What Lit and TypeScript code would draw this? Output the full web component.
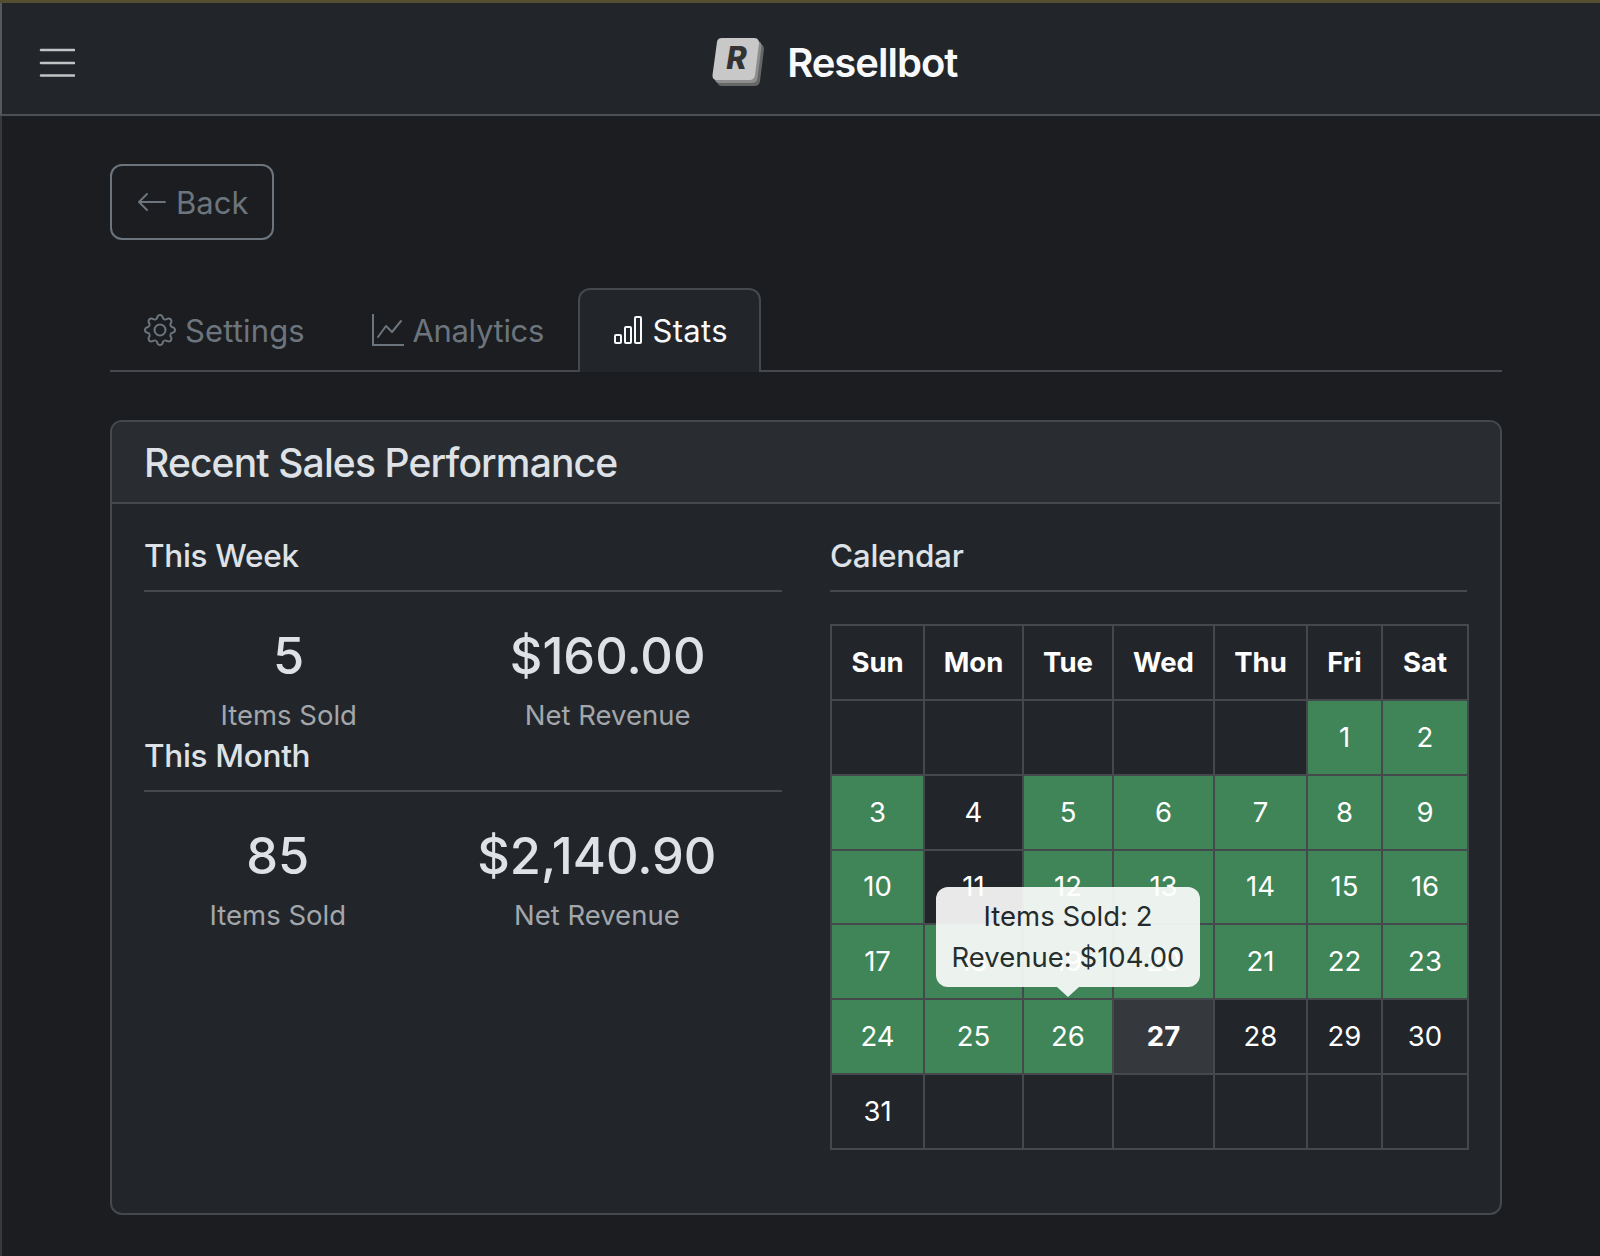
import { LitElement, html, css, svg } from 'lit';
import { customElement } from 'lit/decorators.js';

const greenDays = new Set([1, 2, 3, 5, 6, 7, 8, 9, 10, 12, 13, 14, 15, 16, 17, 18, 19, 20, 21, 22, 23, 24, 25, 26]);
const weekDays = ['Sun', 'Mon', 'Tue', 'Wed', 'Thu', 'Fri', 'Sat'];
const firstOffset = 5;
const today = 27;
const hoverDay = 26;

const gearIcon = svg`<path d="M8 4.754a3.246 3.246 0 1 0 0 6.492 3.246 3.246 0 0 0 0-6.492zM5.754 8a2.246 2.246 0 1 1 4.492 0 2.246 2.246 0 0 1-4.492 0z"/><path d="M9.796 1.343c-.527-1.79-3.065-1.79-3.592 0l-.094.319a.873.873 0 0 1-1.255.52l-.292-.16c-1.64-.892-3.433.902-2.54 2.541l.159.292a.873.873 0 0 1-.52 1.255l-.319.094c-1.79.527-1.79 3.065 0 3.592l.319.094a.873.873 0 0 1 .52 1.255l-.16.292c-.892 1.64.901 3.434 2.541 2.54l.292-.159a.873.873 0 0 1 1.255.52l.094.319c.527 1.79 3.065 1.79 3.592 0l.094-.319a.873.873 0 0 1 1.255-.52l.292.16c1.64.893 3.434-.902 2.54-2.541l-.159-.292a.873.873 0 0 1 .52-1.255l.319-.094c1.79-.527 1.79-3.065 0-3.592l-.319-.094a.873.873 0 0 1-.52-1.255l.16-.292c.893-1.64-.902-3.433-2.541-2.54l-.292.159a.873.873 0 0 1-1.255-.52l-.094-.319zm-2.633.283c.246-.835 1.428-.835 1.674 0l.094.319a1.873 1.873 0 0 0 2.693 1.115l.291-.16c.764-.415 1.6.42 1.184 1.185l-.159.292a1.873 1.873 0 0 0 1.116 2.692l.318.094c.835.246.835 1.428 0 1.674l-.319.094a1.873 1.873 0 0 0-1.115 2.693l.16.291c.415.764-.42 1.6-1.185 1.184l-.291-.159a1.873 1.873 0 0 0-2.693 1.116l-.094.318c-.246.835-1.428.835-1.674 0l-.094-.319a1.873 1.873 0 0 0-2.692-1.115l-.292.16c-.764.415-1.6-.42-1.184-1.185l.159-.291A1.873 1.873 0 0 0 1.945 8.93l-.319-.094c-.835-.246-.835-1.428 0-1.674l.319-.094A1.873 1.873 0 0 0 3.06 4.377l-.16-.292c-.415-.764.42-1.6 1.185-1.184l.292.159a1.873 1.873 0 0 0 2.692-1.115l.094-.319z"/>`;
const graphIcon = svg`<path fill-rule="evenodd" d="M0 0h1v15h15v1H0V0Zm14.817 3.113a.5.5 0 0 1 .07.704l-4.5 5.5a.5.5 0 0 1-.74.037L7.06 6.767l-3.656 5.027a.5.5 0 0 1-.808-.588l4-5.5a.5.5 0 0 1 .758-.06l2.609 2.61 4.15-5.073a.5.5 0 0 1 .704-.07Z"/>`;
const barIcon = svg`<path d="M4 11H2v3h2v-3zm5-4H7v7h2V7zm5-5v12h-2V2h2zm-2-1a1 1 0 0 0-1 1v12a1 1 0 0 0 1 1h2a1 1 0 0 0 1-1V2a1 1 0 0 0-1-1h-2zM6 7a1 1 0 0 1 1-1h2a1 1 0 0 1 1 1v7a1 1 0 0 1-1 1H7a1 1 0 0 1-1-1V7zm-5 4a1 1 0 0 1 1-1h2a1 1 0 0 1 1 1v3a1 1 0 0 1-1 1H2a1 1 0 0 1-1-1v-3z"/>`;
const arrowIcon = svg`<path fill-rule="evenodd" d="M15 8a.5.5 0 0 0-.5-.5H2.707l3.147-3.146a.5.5 0 1 0-.708-.708l-4 4a.5.5 0 0 0 0 .708l4 4a.5.5 0 0 0 .708-.708L2.707 8.5H14.5A.5.5 0 0 0 15 8z"/>`;

// key cap outline, repeated three times for the stacked look of the logo
const keyPath = 'M11 1H43Q48 1 48 6L44 38Q43.5 43 38 43H6Q1 43 1.5 38L6 5Q6.5 1 11 1Z';

@customElement('app-root')
export class AppRoot extends LitElement {
  static styles = css`
    :host {
      display: block;
      min-height: 1256px;
      box-sizing: border-box;
      background: #1b1d21;
      border-top: 3px solid #534f30;
      font-family: Inter, "Noto Sans", sans-serif;
      color: #dee2e6;
    }

    .navbar {
      height: 113px;
      box-sizing: border-box;
      padding-top: 7px;
      border-bottom: 2px solid #4d5156;
      border-left: 2px solid #55585c;
      background: #22262b;
      display: flex;
      align-items: center;
      justify-content: center;
      position: relative;
    }

    .toggler {
      position: absolute;
      left: 37px;
      top: 44px;
      width: 36px;
      height: 30px;
      color: #c2c3c5;
    }

    .brand {
      display: flex;
      align-items: center;
      gap: 22px;
      font-size: 40px;
      font-weight: 600;
      color: #f8f9fa;
      letter-spacing: -1px;
      margin-left: 66.5px;
    }

    .logo {
      width: 54px;
      height: 50px;
      display: block;
    }

    .main {
      padding: 48px 98px 41px 108px;
      border-left: 2px solid #36383c;
    }

    .back {
      display: inline-flex;
      align-items: center;
      gap: 8px;
      height: 76px;
      box-sizing: border-box;
      padding: 0 24px;
      border: 2px solid #6c757d;
      border-radius: 12px;
      color: #6c757d;
      font-size: 31px;
      vertical-align: top;
    }

    .icon {
      width: 32px;
      height: 32px;
      fill: currentColor;
      flex: none;
    }

    .tabs {
      display: flex;
      margin-top: 48px;
      height: 84px;
      box-sizing: border-box;
      border-bottom: 2px solid #45494e;
    }

    .tab {
      display: flex;
      align-items: center;
      gap: 9px;
      height: 84px;
      box-sizing: border-box;
      padding: 0 31.5px 2px 32px;
      border: 2px solid transparent;
      border-bottom: 0;
      border-radius: 12px 12px 0 0;
      color: #6c757d;
      font-size: 31px;
      letter-spacing: 0.15px;
    }

    .tab + .tab {
      gap: 8px;
      letter-spacing: -0.3px;
    }

    .tab.active {
      gap: 9px;
      background: #22262b;
      border-color: #45494e;
      color: #f8f9fa;
      letter-spacing: 0.3px;
    }

    .card {
      margin-top: 48px;
      height: 795px;
      box-sizing: border-box;
      background: #22262b;
      border: 2px solid #45494e;
      border-radius: 12px;
    }

    .card-header {
      height: 82px;
      box-sizing: border-box;
      padding: 0 32px;
      display: flex;
      align-items: center;
      background: #292d32;
      border-bottom: 2px solid #45494e;
      border-radius: 10px 10px 0 0;
      font-size: 39px;
      font-weight: 500;
      letter-spacing: -0.85px;
      color: #dee2e6;
    }

    .card-body {
      display: grid;
      grid-template-columns: 638px 637px;
      column-gap: 48px;
      padding: 0 33px 0 32px;
    }

    .section-title {
      margin-top: 32px;
      padding-bottom: 14px;
      line-height: 40px;
      font-size: 31.5px;
      font-weight: 500;
      letter-spacing: -0.3px;
      border-bottom: 2px solid #45494e;
    }

    .section + .section .section-title {
      margin-top: 0;
    }

    .stats {
      display: flex;
      justify-content: space-around;
      margin-top: 35px;
      text-align: center;
    }

    .value {
      font-size: 50.5px;
      font-weight: 500;
      line-height: 58px;
    }

    .label {
      margin-top: 10px;
      font-size: 27.5px;
      line-height: 41px;
      color: #a3a7ac;
    }

    table {
      margin-top: 32px;
      width: 637px;
      table-layout: fixed;
      border-collapse: collapse;
    }

    th, td {
      box-sizing: border-box;
      height: 74.85px;
      padding: 0 0 1px;
      border: 2px solid #45494e;
      text-align: center;
      vertical-align: middle;
      font-size: 27.5px;
      color: #fff;
      position: relative;
    }

    th { font-weight: 700; }
    th:nth-child(1) { width: 93px; }
    th:nth-child(2) { width: 99px; }
    th:nth-child(3) { width: 90px; }
    th:nth-child(4) { width: 101px; }
    th:nth-child(5) { width: 93px; }
    th:nth-child(6) { width: 75px; }
    th:nth-child(7) { width: 86px; }

    td.sold { background: #408558; }
    td.today { background: #35393d; font-weight: 700; }

    .tooltip {
      position: absolute;
      left: 50%;
      bottom: calc(100% + 13px);
      transform: translateX(-50%);
      width: 264px;
      box-sizing: border-box;
      padding: 8.5px 0;
      background: #fff;
      opacity: 0.9;
      border-radius: 12px;
      color: #212529;
      font-size: 27.5px;
      font-weight: 400;
      line-height: 41.5px;
      z-index: 2;
    }

    .tooltip::after {
      content: "";
      position: absolute;
      left: 50%;
      top: 100%;
      margin-left: -11px;
      border: 11px solid transparent;
      border-bottom: 0;
      border-top: 10px solid #fff;
    }
  `;

  private renderWeeks() {
    const cells: (number | null)[] = [];
    for (let i = 0; i < firstOffset; i++) cells.push(null);
    for (let d = 1; d <= 31; d++) cells.push(d);
    while (cells.length % 7) cells.push(null);
    const rows = [];
    for (let i = 0; i < cells.length; i += 7) rows.push(cells.slice(i, i + 7));
    return rows.map(row => html`<tr>${row.map(d => this.renderDay(d))}</tr>`);
  }

  private renderDay(d: number | null) {
    if (d === null) return html`<td></td>`;
    const cls = greenDays.has(d) ? 'sold' : d === today ? 'today' : '';
    return html`<td class=${cls}>${d}${d === hoverDay ? html`
      <div class="tooltip"><div>Items Sold: 2</div><div>Revenue: $104.00</div></div>` : ''}</td>`;
  }

  private renderSection(title: string, sold: string, revenue: string) {
    return html`
      <div class="section">
        <div class="section-title">${title}</div>
        <div class="stats">
          <div><div class="value">${sold}</div><div class="label">Items Sold</div></div>
          <div><div class="value">${revenue}</div><div class="label">Net Revenue</div></div>
        </div>
      </div>
    `;
  }

  render() {
    return html`
      <div class="navbar">
        <svg class="toggler" viewBox="0 0 36 30" fill="none" stroke="currentColor" stroke-width="2.6" stroke-linecap="round">
          <path d="M2 3h33M2 16h33M2 28.5h33"/>
        </svg>
        <div class="brand">
          <svg class="logo" viewBox="0 0 54 50">
            <path d=${keyPath} transform="translate(5 6)" fill="#666"/>
            <path d=${keyPath} transform="translate(2.5 3)" fill="#8e8e8e"/>
            <path d=${keyPath} fill="#c8c8c8"/>
            <text x="25" y="32" text-anchor="middle" font-family="Inter, sans-serif" font-size="31" font-weight="800" font-style="italic" fill="#333">R</text>
          </svg>
          <span>Resellbot</span>
        </div>
      </div>
      <div class="main">
        <a class="back"><svg class="icon" viewBox="0 0 16 16">${arrowIcon}</svg>Back</a>
        <div class="tabs">
          <a class="tab"><svg class="icon" viewBox="0 0 16 16">${gearIcon}</svg>Settings</a>
          <a class="tab"><svg class="icon" viewBox="0 0 16 16">${graphIcon}</svg>Analytics</a>
          <a class="tab active"><svg class="icon" viewBox="0 0 16 16">${barIcon}</svg>Stats</a>
        </div>
        <div class="card">
          <div class="card-header">Recent Sales Performance</div>
          <div class="card-body">
            <div>
              ${this.renderSection('This Week', '5', '$160.00')}
              ${this.renderSection('This Month', '85', '$2,140.90')}
            </div>
            <div>
              <div class="section-title">Calendar</div>
              <table>
                <tr>${weekDays.map(d => html`<th>${d}</th>`)}</tr>
                ${this.renderWeeks()}
              </table>
            </div>
          </div>
        </div>
      </div>
    `;
  }
}
